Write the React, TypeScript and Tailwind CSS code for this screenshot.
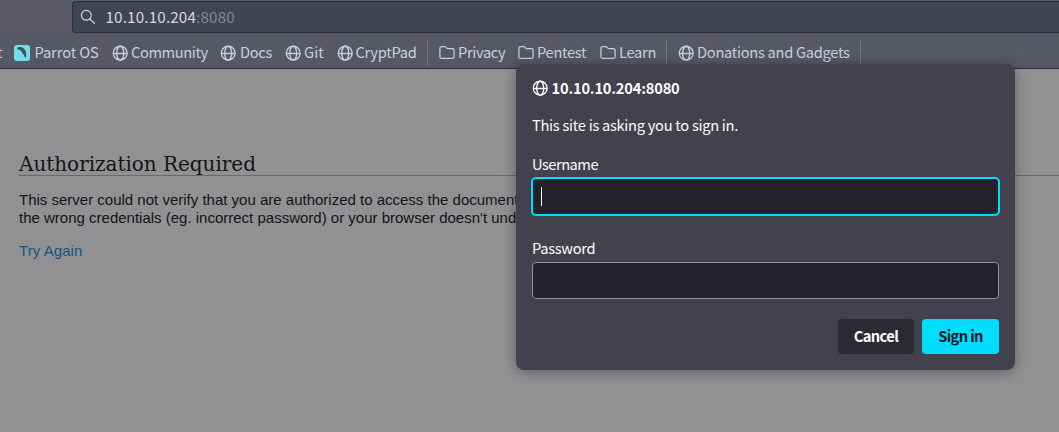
import type { ReactNode } from "react";

const ui = "font-['Noto_Sans_CJK_SC','Noto_Sans',sans-serif]";

function Globe() {
  return (
    <svg viewBox="0 0 16 16" className="size-4 shrink-0" fill="none" stroke="currentColor" strokeWidth="1.4">
      <circle cx="8.2" cy="8.2" r="6.9" />
      <ellipse cx="8.2" cy="8.2" rx="3.5" ry="6.9" />
      <path d="M1.3 8.5h13.8" />
    </svg>
  );
}

function Folder() {
  return (
    <svg viewBox="0 0 16 16" className="size-4 shrink-0" fill="none" stroke="currentColor" strokeWidth="1.25" strokeLinejoin="round">
      <path d="M2.6 1.6h3.1c.5 0 .9.2 1.2.5l.9 1c.3.3.6.4 1 .4h4.6c1 0 1.7.7 1.7 1.6v6.6c0 1-.7 1.700-1.700 1.700H2.600c-1 0-1.700-.7-1.700-1.700V3.300c0-1 .7-1.700 1.700-1.700z" />
    </svg>
  );
}

function Parrot() {
  return (
    <svg viewBox="0 0 16 16" className="size-4 shrink-0">
      <rect width="16" height="16" rx="3" fill="#70dfec" />
      <path d="M3 2.700C5 1.700 8.300 1.900 10.300 4.100c1.600 1.900 2.500 5 1.600 9.400l-1-2.200-.5 1-.7-3.200-1 .5C8.400 7.400 7.400 5.600 5.500 4.700l-1 .3v-.9l-1.200.2z" fill="#41515f" />
    </svg>
  );
}

function Bookmark({ icon, label, width, tracking = "tracking-[-0.3px]" }: { icon: ReactNode; label: string; width: string; tracking?: string }) {
  return (
    <div className={`flex shrink-0 items-center gap-[3px] ${width}`}>
      {icon}
      <span className={`-mt-0.5 whitespace-nowrap ${tracking}`}>{label}</span>
    </div>
  );
}

function Separator({ className = "" }: { className?: string }) {
  return <div className={`h-[25px] w-px shrink-0 bg-[#777985] ${className}`} />;
}

function Field({ label, tracking, focused = false }: { label: string; tracking: string; focused?: boolean }) {
  return (
    <label className="flex flex-col">
      <span className={`flex h-6 items-center pb-0.5 ${tracking}`}>{label}</span>
      {focused ? (
        <span className="-mx-px flex h-[39px] items-center rounded-[5px] border-2 border-[#00ddff] bg-[#23222b] pl-2">
          <span className="h-[19px] w-px bg-[#fbfbfe]" />
        </span>
      ) : (
        <span className="mt-px h-[37px] rounded border border-[#8f8f9d] bg-[#23222b]" />
      )}
    </label>
  );
}

function SignInDialog() {
  return (
    <div className={`absolute top-16 left-[516px] flex h-[306px] w-[499px] flex-col rounded-lg bg-[#42414d] px-4 text-[14.67px] leading-6 text-[#fbfbfe] shadow-[0_2px_14px_rgba(0,0,0,0.35)] ${ui}`}>
      <div className="mt-3 flex h-6 items-center gap-[3.5px] font-bold">
        <Globe />
        <span className="tracking-[-0.2px]">10.10.10.204:8080</span>
      </div>
      <p className="mt-[13px] h-6 tracking-[-0.28px]">This site is asking you to sign in.</p>
      <div className="mt-4">
        <Field label="Username" tracking="tracking-[-0.5px]" focused />
      </div>
      <div className="mt-[21px]">
        <Field label="Password" tracking="tracking-[-0.3px]" />
      </div>
      <div className="mt-5 flex justify-end gap-2 font-bold tracking-[-0.6px]">
        <button className="h-[35px] w-[76px] rounded bg-[#2b2a33] pb-0.5">Cancel</button>
        <button className="h-[35px] w-[77px] rounded bg-[#00ddff] pb-0.5 text-[#15141a]">Sign in</button>
      </div>
    </div>
  );
}

export default function App() {
  return (
    <div className="relative flex h-[432px] w-[1059px] flex-col overflow-hidden bg-[#919193]">
      <header className={`flex h-[69px] shrink-0 flex-col border-b border-[#2d2f3d] bg-linear-to-b from-[#5a5966] to-[#555864] pt-px text-[14.67px] text-[#c9cfdb] ${ui}`}>
        <div className="ml-[72px] flex h-8 items-center rounded-l border border-r-0 border-[#2b2e3b] bg-[#404552] pl-[7px]">
          <svg viewBox="0 0 16 16" className="size-4" fill="none" stroke="currentColor" strokeWidth="1.3" strokeLinecap="round">
            <circle cx="6.3" cy="6.3" r="4.9" />
            <path d="m10 10 4.5 4.5" />
          </svg>
          <span className="-mt-0.5 ml-[9.5px] text-[15.2px] tracking-[0.17px] text-[#d3dae3]">10.10.10.204<span className="text-[#858894]">:8080</span></span>
        </div>
        <nav className="flex h-[35px] items-center pt-1">
          <span className="-mt-0.5 w-[14px] shrink-0 -translate-x-[3px]">t</span>
          <Bookmark icon={<Parrot />} label="Parrot OS" width="w-[97.5px]" tracking="ml-[1.5px] tracking-[-0.1px]" />
          <Bookmark icon={<Globe />} label="Community" width="w-[108px]" tracking="ml-[0.5px] tracking-[-0.4px]" />
          <Bookmark icon={<Globe />} label="Docs" width="w-[65px]" tracking="ml-[1.5px] tracking-[-0.3px]" />
          <Bookmark icon={<Globe />} label="Git" width="w-[52px]" tracking="ml-[0.5px] tracking-[0.1px]" />
          <Bookmark icon={<Globe />} label="CryptPad" width="w-[90.5px]" />
          <Separator className="mr-[11px]" />
          <Bookmark icon={<Folder />} label="Privacy" width="w-[79px]" tracking="tracking-[-0.35px]" />
          <Bookmark icon={<Folder />} label="Pentest" width="w-[82px]" />
          <Bookmark icon={<Folder />} label="Learn" width="w-[66px]" />
          <Separator className="mr-[11px]" />
          <Bookmark icon={<Globe />} label="Donations and Gadgets" width="w-[182px]" tracking="tracking-[-0.29px]" />
          <Separator />
        </nav>
      </header>
      <main className="pt-[82px] pl-[19px] font-['Liberation_Sans',sans-serif] text-[15px] leading-[18px] text-[#141416]">
        <h1 className="h-[25px] border-b border-[#69696b] pt-px font-['DejaVu_Serif',serif] text-[20px] leading-6 tracking-[-0.03px]">Authorization Required</h1>
        <p className="mt-[15px] whitespace-nowrap">
          This server could not verify that you are authorized to access the document requested.
          <br />
          the wrong credentials (eg. incorrect password) or your browser doesn't understand how
        </p>
        <a className="mt-[15px] block tracking-[0.06px] text-[#155184]">Try Again</a>
      </main>
      <SignInDialog />
    </div>
  );
}
